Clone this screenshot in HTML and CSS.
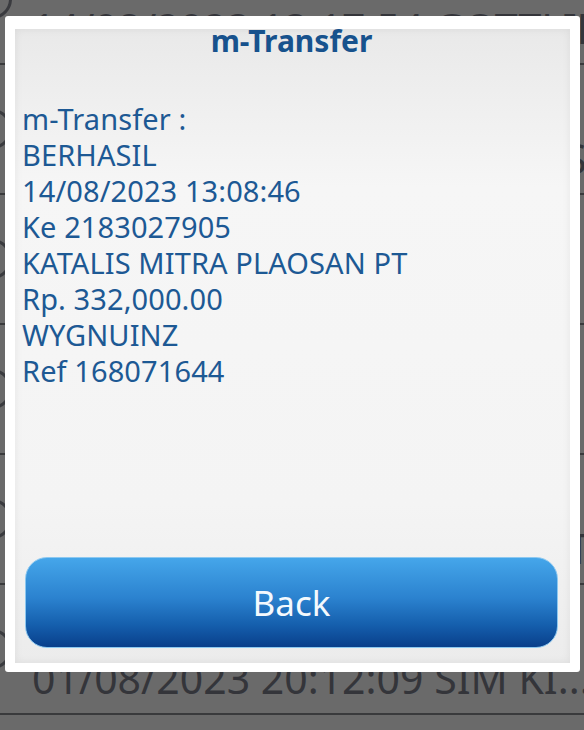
FILE: index.html
```html
<!DOCTYPE html>
<html lang="en">
<head>
    <meta charset="UTF-8">
    <title>m-Transfer</title>
    <link rel="stylesheet" href="styles.css">
</head>
<body>
<div id="screen">
    <ul id="history">
        <li class="row">
            <span class="ico"></span>
            <div class="txt">
                <p class="name">Transfer ke rekening BCA</p>
                <p class="date">14/08/2023 13:17:54 GOTTLIEB</p>
            </div>
        </li>
        <li class="row">
            <span class="ico"></span>
            <div class="txt">
                <p class="name">m-Transfer BERHASIL</p>
                <p class="date">14/08/2023 13:08:46 KATALIS</p>
            </div>
        </li>
        <li class="row">
            <span class="ico"></span>
            <div class="txt">
                <p class="name">m-Info saldo rekening</p>
                <p class="date">10/08/2023 09:41:12 SALDO</p>
            </div>
        </li>
        <li class="row">
            <span class="ico"></span>
            <div class="txt">
                <p class="name">m-Payment pulsa prabayar</p>
                <p class="date">05/08/2023 18:22:30 PULSA</p>
            </div>
        </li>
        <li class="row">
            <span class="ico"></span>
            <div class="txt">
                <p class="name">m-Transfer antar rekening</p>
                <p class="date">03/08/2023 11:05:48 SUDARTO</p>
            </div>
        </li>
        <li class="row">
            <span class="ico"></span>
            <div class="txt">
                <p class="name">m-Transfer BERHASIL</p>
                <p class="date">01/08/2023 20:12:09 SIM KI...</p>
            </div>
        </li>
    </ul>

    <div id="dialog">
        <div class="panel">
            <h1 class="title">m-Transfer</h1>
            <div class="msg">
                <p>m-Transfer :</p>
                <p>BERHASIL</p>
                <p>14/08/2023 13:08:46</p>
                <p>Ke 2183027905</p>
                <p>KATALIS MITRA PLAOSAN PT</p>
                <p>Rp. 332,000.00</p>
                <p>WYGNUINZ</p>
                <p>Ref 168071644</p>
            </div>
            <div class="btn">Back</div>
        </div>
    </div>
</div>
</body>
</html>
```

FILE: styles.css
```css
*{
    margin: 0;
    padding: 0;
    list-style: none;
}
body{
    background: #6a6a6a;
    font-family: "Noto Sans", "Open Sans", sans-serif;
}
#screen{
    position: relative;
    width: 584px;
    height: 730px;
    overflow: hidden;
    background: #6a6a6a;
}
#history{
    margin-top: -65px;
}
#history .row{
    display: flex;
    height: 128px;
    border-bottom: 2px solid #393a3c;
}
#history .ico{
    flex: none;
    width: 34px;
    height: 34px;
    margin: 44px 0 0 -28px;
    border: 3px solid #3a3b3f;
    border-radius: 50%;
}
#history .txt{
    padding-left: 20px;
    color: #34353a;
    font-size: 41px;
    line-height: 40px;
    white-space: nowrap;
}
#history .name{
    height: 40px;
    margin-top: 18px;
}
#history .date{
    margin-top: 15px;
}

#dialog{
    position: absolute;
    top: 16px;
    left: 5px;
    width: 575px;
    height: 656px;
    padding: 13px 10px 9px 10px;
    box-sizing: border-box;
    background: #fff;
    border-radius: 3px;
    display: flex;
}
#dialog .panel{
    flex: 1;
    display: flex;
    flex-direction: column;
    padding: 0 12px 15px 0;
    background: linear-gradient(to bottom, #e9e9e9, #f6f6f6 25%, #f4f4f4 75%, #ececec);
    box-shadow: inset 0 0 8px rgba(0,0,0,.07);
}
#dialog .title{
    padding-left: 10px;
    text-align: center;
    font-size: 30px;
    line-height: 24px;
    font-weight: bold;
    color: #17528d;
}
#dialog .msg{
    margin-top: 48px;
    padding-left: 7px;
    font-size: 29px;
    line-height: 36px;
    color: #1d5994;
    letter-spacing: 0.1px;
}
#dialog .btn{
    margin-top: auto;
    margin-left: 10px;
    height: 89px;
    border: 1px solid #8cc8f0;
    border-radius: 22px;
    background: linear-gradient(to bottom, #45a6ea, #2b82cf 45%, #155fad 75%, #093f8b);
    color: #f4f9fd;
    font-size: 35px;
    line-height: 89px;
    text-align: center;
}
```
